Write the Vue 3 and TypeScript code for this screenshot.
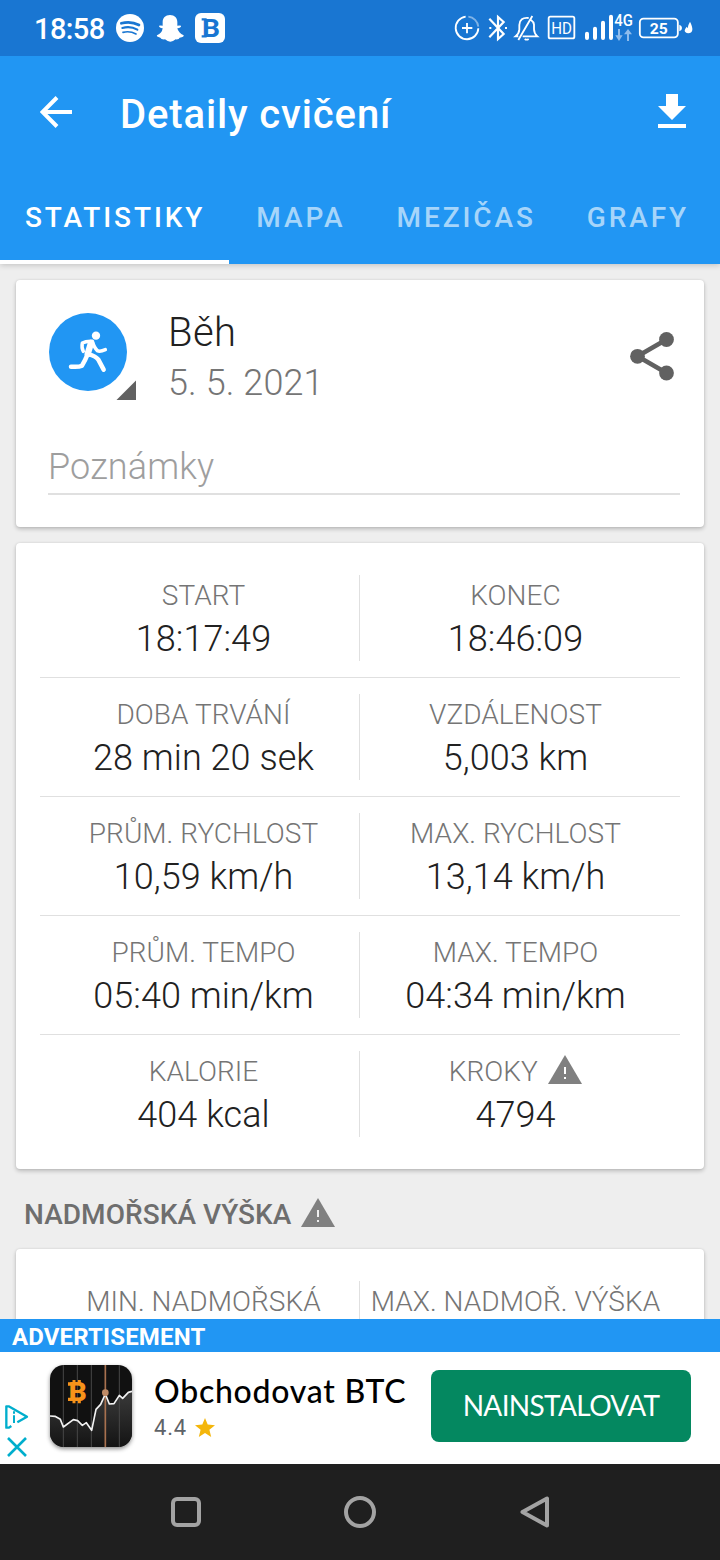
<script setup lang="ts">
interface Stat {
  label: string
  value: string
  warn?: boolean
}

const tabs: string[] = ['STATISTIKY', 'MAPA', 'MEZIČAS', 'GRAFY']

const rows: Stat[][] = [
  [{ label: 'START', value: '18:17:49' }, { label: 'KONEC', value: '18:46:09' }],
  [{ label: 'DOBA TRVÁNÍ', value: '28 min 20 sek' }, { label: 'VZDÁLENOST', value: '5,003 km' }],
  [{ label: 'PRŮM. RYCHLOST', value: '10,59 km/h' }, { label: 'MAX. RYCHLOST', value: '13,14 km/h' }],
  [{ label: 'PRŮM. TEMPO', value: '05:40 min/km' }, { label: 'MAX. TEMPO', value: '04:34 min/km' }],
  [{ label: 'KALORIE', value: '404 kcal' }, { label: 'KROKY', value: '4794', warn: true }],
]
</script>

<template>
  <div class="screen">
    <header class="status">
      <span class="time">18:58</span>
      <svg width="35" height="56" viewBox="339 0 105 168">
        <circle cx="390" cy="84" r="42" fill="#fff" />
        <g fill="none" stroke="#1976d2" stroke-linecap="round">
          <path d="M364 70Q392 62 417 75" stroke-width="8" />
          <path d="M367 84Q391 77 412 89" stroke-width="6.5" />
          <path d="M369 97Q390 92 408 102" stroke-width="5" />
        </g>
      </svg>
      <svg width="44" height="56" viewBox="444 0 132 168">
        <path fill="#fff" d="M510 45C496 45 488 54 488 66V77Q482 76 477 77Q476 82 488 85Q486 100 471 106Q468 110 481 113Q483 119 495 118Q503 125 511 125Q519 125 527 118Q537 119 539 113Q553 111 551 106Q535 99 532 85Q545 82 543 77Q538 76 532 77V66C532 54 524 45 510 45Z" />
      </svg>
      <svg width="36" height="56" viewBox="576 0 108 168">
        <rect x="585" y="39" width="90" height="90" rx="18" fill="#fff" />
        <path d="M605 58H620M605 109H620" stroke="#1976d2" stroke-width="7" />
        <text class="slab" x="633" y="112" text-anchor="middle" textLength="54" lengthAdjust="spacingAndGlyphs" fill="#1976d2">B</text>
      </svg>
      <span class="grow"></span>
      <svg width="30" height="56" viewBox="39 0 90 168" fill="none" stroke="#fff" stroke-width="5.500">
        <path d="M77 50A34 34 0 1 0 115 85" />
        <path d="M85 50A34 34 0 0 1 115 80" opacity=".45" />
        <path d="M66 84H97M81 69V100" />
      </svg>
      <svg width="28" height="56" viewBox="129 0 84 168" fill="none" stroke="#fff" stroke-width="6.500">
        <path d="M148 56L191 102L174 117V51L191 66L148 112" />
        <path d="M148 84H154M195 84H201" />
      </svg>
      <svg width="31" height="56" viewBox="213 0 93 168" fill="none" stroke="#fff" stroke-width="5.500">
        <path d="M248 109H292Q282 100 282 88V74Q281 65 273 60M266 54Q239 51 238 75V89Q237 101 227 109H235M277 48L235 120M254 117Q260 121 266 117" />
      </svg>
      <svg width="39" height="56" viewBox="306 0 117 168">
        <rect x="326" y="50" width="77" height="65" rx="5" fill="none" stroke="#fff" stroke-width="5.500" />
        <text class="hd" x="364.500" y="101" text-anchor="middle" textLength="62" lengthAdjust="spacingAndGlyphs" fill="#fff">HD</text>
      </svg>
      <svg width="55" height="56" viewBox="423 0 165 168">
        <path d="M441 101V114M465 86V114M489 68V114M513 50V114" stroke="#fff" stroke-width="12" stroke-linecap="round" />
        <text class="net" x="523" y="78" textLength="56" lengthAdjust="spacingAndGlyphs" fill="#fff">4G</text>
        <path d="M534 87H540V106H548L537 123L526 106H534ZM561 123H567V103H576L564 87L552 103H561Z" fill="#8fbcec" />
      </svg>
      <svg class="battery" width="58" height="56" viewBox="588 0 174 168">
        <rect x="599.500" y="56" width="114" height="56" rx="11" fill="none" stroke="#fff" stroke-width="5.500" />
        <path d="M718 74Q726 76 726 84Q726 92 718 94Z" fill="#fff" />
        <text class="charge" x="656.500" y="101" text-anchor="middle" textLength="54" lengthAdjust="spacingAndGlyphs" fill="#fff">25</text>
        <path d="M750 65Q758 80 757 90Q755 100 745 100Q734 99 734 91Q736 85 740 80Q742 84 743 84Q744 75 750 65Z" fill="#fff" />
      </svg>
    </header>

    <div class="appbar">
      <div class="toolbar">
        <svg class="back" width="32" height="32" viewBox="0 0 32 32" fill="none" stroke="#fff" stroke-width="4">
          <path d="M17 1.500L2.500 16L17 30.500M2.500 16H32" />
        </svg>
        <h1>Detaily cvičení</h1>
        <svg class="download" width="28" height="34" viewBox="0 0 28 34" fill="#fff">
          <path d="M8 0H20V12H28L14 26L0 12H8ZM0 30H28V34H0Z" />
        </svg>
      </div>
      <nav class="tabs">
        <span v-for="(tab, i) in tabs" :key="tab" class="tab" :class="{ active: i === 0 }">{{ tab }}</span>
      </nav>
    </div>

    <main class="content">
      <section class="card summary">
        <div class="activity">
          <div class="sport">
            <svg width="88" height="88" viewBox="0 0 88 88">
              <circle cx="40" cy="40" r="39" fill="#2196f3" />
              <path d="M88 68.500V88H68.500Z" fill="#616161" />
              <g transform="translate(-48 -42) scale(.33333)" fill="none" stroke="#fff" stroke-linecap="round" stroke-linejoin="round">
                <circle cx="288" cy="197" r="12.500" fill="#fff" stroke="none" />
                <path d="M273 219L263 252" stroke-width="19" />
                <path d="M250 244Q244 233 247 219Q258 213 277 214Q283 234 292 242Q300 246 316 239" stroke-width="10.500" />
                <path d="M264 250Q256 270 246 287Q236 292 213 290M266 253Q287 258 295 269L311 299" stroke-width="13.500" />
              </g>
            </svg>
          </div>
          <div class="names">
            <div class="name">Běh</div>
            <div class="date">5. 5. 2021</div>
          </div>
          <svg class="share" width="44" height="49" viewBox="0 0 44 49" fill="#616161">
            <path d="M36.500 7.500L7.500 24.300L36.500 41" fill="none" stroke="#616161" stroke-width="4.600" />
            <circle cx="36.500" cy="7.500" r="7.400" /><circle cx="7.500" cy="24.300" r="7.400" /><circle cx="36.500" cy="41" r="7.400" />
          </svg>
        </div>
        <div class="notes">Poznámky</div>
      </section>

      <section class="card stats">
        <div v-for="(row, i) in rows" :key="i" class="row">
          <div v-for="stat in row" :key="stat.label" class="cell">
            <div class="label">
              <span>{{ stat.label }}</span>
              <svg v-if="stat.warn" class="warn" width="34" height="29" viewBox="0 0 34 29">
                <path d="M17 0L34 29H0Z" fill="#808080" /><path d="M16 12H18V19H16ZM16 22H18V24H16Z" fill="#fff" />
              </svg>
            </div>
            <div class="value">{{ stat.value }}</div>
          </div>
        </div>
      </section>

      <h2>
        <span>NADMOŘSKÁ VÝŠKA</span>
        <svg width="34" height="29" viewBox="0 0 34 29">
          <path d="M17 0L34 29H0Z" fill="#808080" /><path d="M16 12H18V19H16ZM16 22H18V24H16Z" fill="#eee" />
        </svg>
      </h2>

      <section class="card stats">
        <div class="row">
          <div class="cell"><div class="label two-line">MIN. NADMOŘSKÁ<br />VÝŠKA</div></div>
          <div class="cell"><div class="label">MAX. NADMOŘ. VÝŠKA</div></div>
        </div>
      </section>
    </main>

    <div class="adlabel">ADVERTISEMENT</div>
    <aside class="ad">
      <div class="adchoices">
        <svg width="24" height="24" viewBox="15 195 72 72" fill="none" stroke="#00aecd" stroke-width="7" stroke-linejoin="round">
          <path d="M34 258L27 263H19V199H26L81 230L52 247" />
          <path d="M42 226V249M42 214V221" stroke-width="6" />
        </svg>
        <svg width="20" height="20" viewBox="0 0 20 20" fill="none" stroke="#00aecd" stroke-width="2.600">
          <path d="M1 1L19 19M19 1L1 19" />
        </svg>
      </div>
      <svg class="appicon" width="82" height="82" viewBox="150 75 246 246">
        <defs>
          <linearGradient id="area" x1="0" y1="0" x2="0" y2="1">
            <stop offset="0" stop-color="#3a3a3a" /><stop offset="1" stop-color="#141414" />
          </linearGradient>
        </defs>
        <rect x="150" y="75" width="246" height="246" fill="#111" />
        <path d="M150 228L165 229L181 238L190 261L220 239L233 242L247 256L259 248L275 271L288 208L302 193L316 162L328 192L342 191L358 166L368 175L385 157L396 154V321H150Z" fill="url(#area)" />
        <path d="M190 75V321M232 75V321M274 75V321M358 75V321" stroke="#484848" stroke-width="3" />
        <path d="M316 75V321" stroke="#a7714f" stroke-width="5" />
        <path d="M150 228L165 229L181 238L190 261L220 239L233 242L247 256L259 248L275 271L288 208L302 193L316 162L328 192L342 191L358 166L368 175L385 157L396 154" fill="none" stroke="#f2f2f2" stroke-width="5" stroke-linejoin="round" />
        <circle cx="316" cy="158" r="10" fill="#c08b66" />
        <path d="M222 120V132M238 120V132M222 178V190M238 178V190" stroke="#f7931a" stroke-width="9" />
        <path d="M204 132H218M204 178H218" stroke="#f7931a" stroke-width="10" />
        <text class="coin" x="233" y="183" text-anchor="middle" textLength="54" lengthAdjust="spacingAndGlyphs" fill="#f7931a">B</text>
      </svg>
      <div class="adtext">
        <div class="adtitle">Obchodovat BTC</div>
        <div class="rating">
          <span>4.4</span>
          <svg width="20" height="19" viewBox="0 0 20 19"><path d="M10 0L12.700 6.500L20 7.200L14.400 11.800L16.200 19L10 15.100L3.800 19L5.600 11.800L0 7.200L7.300 6.500Z" fill="#f4b60b" /></svg>
        </div>
      </div>
      <div class="install">NAINSTALOVAT</div>
    </aside>

    <footer class="sysnav">
      <svg width="32" height="32" viewBox="0 0 32 32" fill="none" stroke="#a3a3a3" stroke-width="4"><rect x="3" y="3" width="26" height="26" rx="4" /></svg>
      <svg width="32" height="32" viewBox="0 0 32 32" fill="none" stroke="#a3a3a3" stroke-width="4"><circle cx="16" cy="16" r="14" /></svg>
      <svg width="32" height="32" viewBox="0 0 32 32" fill="none" stroke="#a3a3a3" stroke-width="4" stroke-linejoin="round"><path d="M29 2.500V29.500L4.500 16Z" /></svg>
    </footer>
  </div>
</template>

<style>
html,
body {
  margin: 0;
  overflow: hidden;
}
</style>

<style scoped>
.screen {
  width: 720px;
  height: 1560px;
  overflow: hidden;
  display: flex;
  flex-direction: column;
  background: #eee;
  font-family: Roboto, "Liberation Sans", sans-serif;
  font-weight: 300;
}
svg {
  display: block;
  flex: none;
}
.status {
  position: relative;
  z-index: 2;
  height: 56px;
  flex: none;
  display: flex;
  background: #1976d2;
  color: #fff;
}
.time {
  width: 79px;
  padding-left: 34px;
  font-size: 29px;
  line-height: 58px;
  font-weight: 500;
  letter-spacing: -0.6px;
}
.grow {
  flex: 1;
}
.battery {
  margin-right: 26px;
}
.slab {
  font: 700 77px Roboto, sans-serif;
}
.hd {
  font: 400 48px Roboto, sans-serif;
}
.net {
  font: 500 50px Roboto, sans-serif;
}
.charge {
  font: 700 46px Roboto, sans-serif;
}
.coin {
  font: 900 76px Roboto, sans-serif;
}
.appbar {
  position: relative;
  z-index: 1;
  height: 208px;
  flex: none;
  background: #2196f3;
  color: #fff;
  box-shadow: 0 1px 6px rgba(0, 0, 0, 0.2);
}
.toolbar {
  height: 112px;
  display: flex;
  align-items: center;
  padding: 0 34px 0 40px;
}
h1 {
  flex: 1;
  margin: 6px 0 0 48px;
  font-size: 40px;
  line-height: 48px;
  font-weight: 500;
  letter-spacing: 0.87px;
}
.download {
  margin-top: -2px;
}
.tabs {
  height: 96px;
  display: flex;
  gap: 2px;
}
.tab {
  box-sizing: border-box;
  padding: 0 24px 0 25px;
  font-size: 28px;
  line-height: 100px;
  font-weight: 500;
  letter-spacing: 2.9px;
  color: #a6d5fa;
}
.tab.active {
  color: #fff;
  border-bottom: 4px solid #fff;
  height: 96px;
}
.content {
  height: 1055px;
  flex: none;
  overflow: hidden;
}
.card {
  box-sizing: border-box;
  margin: 16px 16px 0;
  background: #fff;
  border-radius: 4px;
  box-shadow: 0 2px 4px rgba(0, 0, 0, 0.22), 0 0 2px rgba(0, 0, 0, 0.1);
}
.summary {
  height: 247px;
  padding: 29px 24px 0 32px;
}
.activity {
  display: flex;
  height: 137px;
}
.sport {
  margin-top: 3px;
  width: 88px;
}
.names {
  flex: 1;
  padding-left: 32px;
}
.name {
  font-size: 40px;
  line-height: 47px;
  letter-spacing: 0.4px;
  color: #212121;
}
.date {
  margin-top: 6px;
  font-size: 36px;
  line-height: 43px;
  letter-spacing: 0.1px;
  color: #757575;
}
.share {
  margin: 23px 6px 0 0;
}
.notes {
  height: 47px;
  font-size: 36px;
  line-height: 43px;
  letter-spacing: 0.15px;
  border-bottom: 2px solid #e0e0e0;
  color: #9e9e9e;
}
.stats {
  padding: 16px 24px;
}
.row {
  height: 86px;
  display: flex;
  padding: 16px 0;
  border-bottom: 1px solid #e0e0e0;
}
.row:last-child {
  border-bottom: 0;
}
.cell {
  box-sizing: border-box;
  width: 320px;
  padding: 4px 0 0 8px;
  text-align: center;
  border-right: 1px solid #e0e0e0;
}
.cell + .cell {
  padding: 4px 9px 0 0;
  border-right: 0;
}
.label {
  display: flex;
  justify-content: center;
  height: 33px;
  font-size: 28px;
  line-height: 33px;
  letter-spacing: 0.04px;
  color: #757575;
}
.two-line {
  line-height: 34px;
}
.warn {
  margin: 0 0 0 10.5px;
}
.value {
  margin-top: 6px;
  font-size: 36px;
  line-height: 43px;
  letter-spacing: 0.05px;
  color: #212121;
}
h2 {
  margin: 0;
  height: 64px;
  display: flex;
  padding: 29px 0 0 24px;
  box-sizing: border-box;
  font-size: 28px;
  line-height: 33px;
  font-weight: 500;
  letter-spacing: 0.05px;
  color: #6e6e6e;
}
h2 svg {
  margin-left: 9.5px;
}
.adlabel {
  position: relative;
  height: 33px;
  flex: none;
  padding-left: 12px;
  font-size: 24px;
  line-height: 37px;
  font-weight: 700;
  letter-spacing: 0.15px;
  background: #2196f3;
  color: #fff;
}
.ad {
  height: 112px;
  flex: none;
  display: flex;
  background: #fff;
}
.adchoices {
  box-sizing: border-box;
  width: 50px;
  padding: 53px 0 0 5px;
}
.adchoices svg + svg {
  margin: 8px 0 0 2px;
}
.appicon {
  margin-top: 13px;
  border-radius: 14px;
  box-shadow: 0 2px 4px rgba(0, 0, 0, 0.45);
}
.adtext {
  width: 294px;
  padding-left: 22px;
  box-sizing: border-box;
  font-family: Lato, sans-serif;
}
.adtitle {
  margin-top: 19px;
  font-size: 32px;
  line-height: 40px;
  font-weight: 500;
  letter-spacing: 0.75px;
  white-space: nowrap;
  color: #000;
}
.rating {
  display: flex;
  align-items: center;
  gap: 8px;
  margin-top: 2px;
  font-family: Roboto, sans-serif;
  font-size: 22px;
  line-height: 30px;
  font-weight: 400;
  letter-spacing: 0.8px;
  color: #5f6368;
}
.rating svg {
  margin-top: -2px;
}
.install {
  width: 260px;
  height: 72px;
  margin: 18px 0 0 5px;
  border-radius: 8px;
  background: #048860;
  color: #fff;
  font: 400 28px/70px Lato, sans-serif;
  letter-spacing: -0.65px;
  text-align: center;
}
.sysnav {
  height: 96px;
  flex: none;
  display: flex;
  justify-content: center;
  align-items: center;
  gap: 142px;
  background: #1f1f1f;
}
</style>
